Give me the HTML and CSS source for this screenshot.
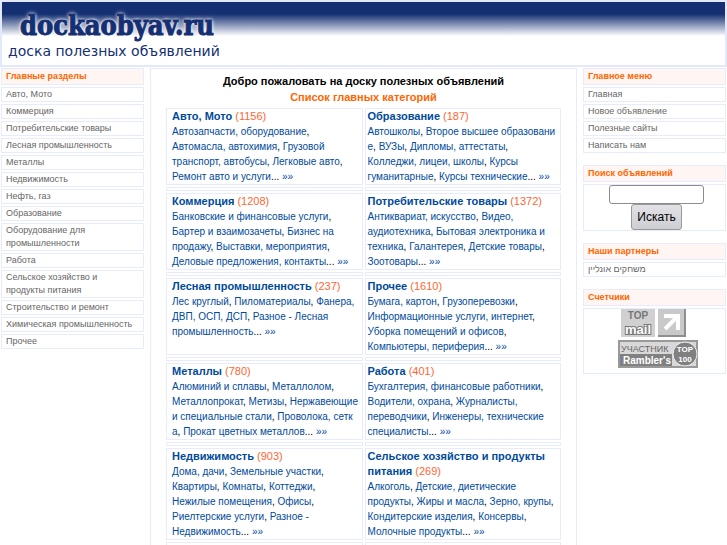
FILE: index.html
```html
<!DOCTYPE html>
<html lang="ru">
  <head>
    <meta charset="UTF-8" />
    <meta name="viewport" content="width=device-width, initial-scale=1.0" />
    <title>Доска полезных объявлений</title>
    <link rel="stylesheet" href="styles.css">
  </head>
  <body>
    <header class="header">
      <a class="logo" href="#">dockaobyav.ru</a>
      <p class="slogan">доска полезных объявлений</p>
    </header>

    <div class="page">
      <!-- Left column -->
      <nav class="sidebar">
        <h3 class="side-title">Главные разделы</h3>
        <ul class="menu">
          <li><a href="#">Авто, Мото</a></li>
          <li><a href="#">Коммерция</a></li>
          <li><a href="#">Потребительские товары</a></li>
          <li><a href="#">Лесная промышленность</a></li>
          <li><a href="#">Металлы</a></li>
          <li><a href="#">Недвижимость</a></li>
          <li><a href="#">Нефть, газ</a></li>
          <li><a href="#">Образование</a></li>
          <li><a href="#">Оборудование для<br />промышленности</a></li>
          <li><a href="#">Работа</a></li>
          <li><a href="#">Сельское хозяйство и<br />продукты питания</a></li>
          <li><a href="#">Строительство и ремонт</a></li>
          <li><a href="#">Химическая промышленность</a></li>
          <li><a href="#">Прочее</a></li>
        </ul>
      </nav>

      <!-- Categories -->
      <main class="content">
        <h1>Добро пожаловать на доску полезных объявлений</h1>
        <h2>Список главных категорий</h2>

        <div class="categories">
          <section class="card">
            <h4><a href="#">Авто, Мото</a> <span>(1156)</span></h4>
            <p>
              <a href="#">Автозапчасти, оборудование</a>,<br />
              <a href="#">Автомасла, автохимия</a>, <a href="#">Грузовой<br />транспорт, автобусы</a>,
              <a href="#">Легковые авто</a>,<br />
              <a href="#">Ремонт авто и услуги</a>... <a href="#">»»</a>
            </p>
          </section>
          <section class="card">
            <h4><a href="#">Образование</a> <span>(187)</span></h4>
            <p>
              <a href="#">Автошколы</a>, <a href="#">Второе высшее образовани<br />е</a>,
              <a href="#">ВУЗы</a>, <a href="#">Дипломы, аттестаты</a>,<br />
              <a href="#">Колледжи, лицеи, школы</a>, <a href="#">Курсы<br />гуманитарные</a>,
              <a href="#">Курсы технические</a>... <a href="#">»»</a>
            </p>
          </section>
          <div class="spacer"></div>
          <div class="spacer"></div>

          <section class="card">
            <h4><a href="#">Коммерция</a> <span>(1208)</span></h4>
            <p>
              <a href="#">Банковские и финансовые услуги</a>,<br />
              <a href="#">Бартер и взаимозачеты</a>, <a href="#">Бизнес на<br />продажу</a>,
              <a href="#">Выставки, мероприятия</a>,<br />
              <a href="#">Деловые предложения, контакты</a>... <a href="#">»»</a>
            </p>
          </section>
          <section class="card">
            <h4><a href="#">Потребительские товары</a> <span>(1372)</span></h4>
            <p>
              <a href="#">Антиквариат, искусство</a>, <a href="#">Видео,<br />аудиотехника</a>,
              <a href="#">Бытовая электроника и<br />техника</a>, <a href="#">Галантерея</a>,
              <a href="#">Детские товары</a>,<br />
              <a href="#">Зоотовары</a>... <a href="#">»»</a>
            </p>
          </section>
          <div class="spacer"></div>
          <div class="spacer"></div>

          <section class="card">
            <h4><a href="#">Лесная промышленность</a> <span>(237)</span></h4>
            <p>
              <a href="#">Лес круглый</a>, <a href="#">Пиломатериалы</a>, <a href="#">Фанера,<br />ДВП, ОСП, ДСП</a>,
              <a href="#">Разное - Лесная<br />промышленность</a>... <a href="#">»»</a>
            </p>
          </section>
          <section class="card">
            <h4><a href="#">Прочее</a> <span>(1610)</span></h4>
            <p>
              <a href="#">Бумага, картон</a>, <a href="#">Грузоперевозки</a>,<br />
              <a href="#">Информационные услуги, интернет</a>,<br />
              <a href="#">Уборка помещений и офисов</a>,<br />
              <a href="#">Компьютеры, периферия</a>... <a href="#">»»</a>
            </p>
          </section>
          <div class="spacer"></div>
          <div class="spacer"></div>

          <section class="card">
            <h4><a href="#">Металлы</a> <span>(780)</span></h4>
            <p>
              <a href="#">Алюминий и сплавы</a>, <a href="#">Металлолом</a>,<br />
              <a href="#">Металлопрокат</a>, <a href="#">Метизы</a>, <a href="#">Нержавеющие<br />и специальные стали</a>,
              <a href="#">Проволока, сетк<br />а</a>, <a href="#">Прокат цветных металлов</a>... <a href="#">»»</a>
            </p>
          </section>
          <section class="card">
            <h4><a href="#">Работа</a> <span>(401)</span></h4>
            <p>
              <a href="#">Бухгалтерия, финансовые работники</a>,<br />
              <a href="#">Водители, охрана</a>, <a href="#">Журналисты,<br />переводчики</a>,
              <a href="#">Инженеры, технические<br />специалисты</a>... <a href="#">»»</a>
            </p>
          </section>
          <div class="spacer"></div>
          <div class="spacer"></div>

          <section class="card">
            <h4><a href="#">Недвижимость</a> <span>(903)</span></h4>
            <p>
              <a href="#">Дома, дачи</a>, <a href="#">Земельные участки</a>,<br />
              <a href="#">Квартиры</a>, <a href="#">Комнаты</a>, <a href="#">Коттеджи</a>,<br />
              <a href="#">Нежилые помещения</a>, <a href="#">Офисы</a>,<br />
              <a href="#">Риелтерские услуги</a>, <a href="#">Разное -<br />Недвижимость</a>... <a href="#">»»</a>
            </p>
          </section>
          <section class="card">
            <h4><a href="#">Сельское хозяйство и продукты<br />питания</a> <span>(269)</span></h4>
            <p>
              <a href="#">Алкоголь</a>, <a href="#">Детские, диетические<br />продукты</a>,
              <a href="#">Жиры и масла</a>, <a href="#">Зерно, крупы</a>,<br />
              <a href="#">Кондитерские изделия</a>, <a href="#">Консервы</a>,<br />
              <a href="#">Молочные продукты</a>... <a href="#">»»</a>
            </p>
          </section>
          <div class="spacer"></div>
          <div class="spacer"></div>
        </div>
      </main>

      <!-- Right column -->
      <aside class="sidebar">
        <h3 class="side-title">Главное меню</h3>
        <ul class="menu">
          <li><a href="#">Главная</a></li>
          <li><a href="#">Новое объявление</a></li>
          <li><a href="#">Полезные сайты</a></li>
          <li><a href="#">Написать нам</a></li>
        </ul>

        <h3 class="side-title"><label for="search">Поиск объявлений</label></h3>
        <form class="side-box search">
          <input type="text" id="search" name="search" />
          <button type="submit">Искать</button>
        </form>

        <h3 class="side-title">Наши партнеры</h3>
        <ul class="menu">
          <li><a href="#" lang="he">משחקים אונליין</a></li>
        </ul>

        <h3 class="side-title">Счетчики</h3>
        <div class="side-box counters">
          <a href="#">
            <svg width="74" height="28" viewBox="0 0 74 28">
              <rect width="34" height="28" fill="#d0d0d0" />
              <text class="top" x="17" y="10" text-anchor="middle">TOP</text>
              <text class="mail" x="17" y="25" text-anchor="middle">mail</text>
              <rect x="37" width="28" height="28" fill="#8e8e8e" />
              <rect x="37" width="26" height="26" fill="#c9c9c9" />
              <path d="M43 7H57V21M57 7L44 20" fill="none" stroke="#fff" stroke-width="4" />
            </svg>
          </a>
          <a href="#">
            <svg width="80" height="28" viewBox="0 0 80 28">
              <rect x="1" y="1" width="78" height="26" fill="#d8d8d8" stroke="#999" stroke-width="2" />
              <rect x="2" y="14" width="52" height="12" fill="#808080" />
              <text class="member" x="3" y="12">УЧАСТНИК</text>
              <text class="rambler" x="5" y="24">Rambler's</text>
              <circle cx="67" cy="14" r="12" fill="#808080" stroke="#eee" />
              <text class="hundred" x="67" y="12" text-anchor="middle">TOP</text>
              <text class="hundred" x="67" y="22" text-anchor="middle">100</text>
            </svg>
          </a>
        </div>
      </aside>
    </div>
  </body>
</html>
```

FILE: styles.css
```css
* {
  box-sizing: border-box;
}
body {
  margin: 0;
  font-family: "Liberation Sans", Arial, sans-serif;
  font-size: 10px;
  line-height: 15px;
  color: #000;
  background-color: #fff;
}
h1,
h2,
h3,
h4,
p,
ul {
  margin: 0;
  padding: 0;
}
a {
  color: #004a9c;
  text-decoration: none;
}

/* Header */
.header {
  padding: 7px 6px 5px;
  border: 2px solid #e3e9fc;
  background: linear-gradient(#142f72 12px, #fff 34px);
}
.logo {
  display: block;
  padding-left: 12px;
  font-family: "DejaVu Serif Condensed", "DejaVu Serif", serif;
  font-size: 27px;
  font-weight: bold;
  line-height: 33px;
  color: #142f72;
  -webkit-text-stroke: 1px #142f72;
  text-shadow: 0 0 2px #fff, 0 0 3px #fff, 0 0 5px #fff;
}
.slogan {
  font-family: "DejaVu Sans", sans-serif;
  font-size: 14px;
  line-height: 18px;
  color: #142f72;
}

/* Columns */
.page {
  display: flex;
  align-items: flex-start;
  gap: 6px;
  padding: 1px 1px 0;
}
.sidebar {
  flex: 0 0 143px;
}
.content {
  flex: 1;
  min-width: 0;
  padding: 5px 15px;
  border: 1px solid #e6ebfd;
  border-bottom: none;
}

/* Side menus */
.side-title {
  margin-bottom: 2px;
  padding: 0 4px;
  border: 1px solid #e6ebfd;
  background-color: #fff5f2;
  font-size: 9px;
  line-height: 15px;
  color: #ff6600;
}
.menu {
  display: flex;
  flex-direction: column;
  gap: 2px;
  margin-bottom: 12px;
  list-style: none;
}
.menu li {
  padding: 0 4px;
  border: 1px solid #e6ebfd;
  font-size: 9px;
  line-height: 13px;
}
.menu a {
  color: #666;
}
.side-box {
  display: flex;
  flex-direction: column;
  align-items: center;
  margin-bottom: 12px;
  padding-left: 4px;
  border: 1px solid #e6ebfd;
}
.search input {
  width: 95px;
  height: 19px;
  border: 1px solid #8c8c8c;
  border-radius: 3px;
}
.search button {
  height: 26px;
  padding: 0 5px;
  border: 1px solid #999;
  border-radius: 3px;
  background: linear-gradient(#e2e2e6, #cdced4);
  font-family: inherit;
  font-size: 12px;
}

/* Counters */
.counters {
  gap: 3px;
  padding: 0 0 5px 6px;
}
.counters a,
.counters svg {
  display: block;
}
.counters text {
  font-weight: bold;
}
.counters .top {
  font-size: 10px;
  fill: #777;
}
.counters .mail {
  font-size: 13px;
  fill: #fff;
  stroke: #777;
  stroke-width: 2px;
  paint-order: stroke;
}
.counters .member {
  font-size: 9px;
  font-weight: normal;
  fill: #666;
}
.counters .rambler {
  font-size: 10px;
  fill: #fff;
}
.counters .hundred {
  font-size: 8px;
  fill: #fff;
}

/* Categories */
.content h1 {
  font-size: 11px;
  line-height: 15px;
  text-align: center;
}
.content h2 {
  margin: 1px 0 3px;
  font-size: 11px;
  line-height: 15px;
  text-align: center;
  color: #ff6600;
}
.categories {
  display: grid;
  grid-template-columns: 1fr 1fr;
  gap: 2px;
}
.card {
  min-width: 0;
  padding: 0 2px;
  border: 1px solid #e6ebfd;
  white-space: nowrap;
}
.card:nth-child(odd) {
  padding-left: 5px;
}
.card h4 {
  font-size: 11px;
}
.card h4 span {
  font-weight: normal;
  color: #ff6633;
}
.spacer {
  height: 4px;
  border: 1px solid #e6ebfd;
}
```
